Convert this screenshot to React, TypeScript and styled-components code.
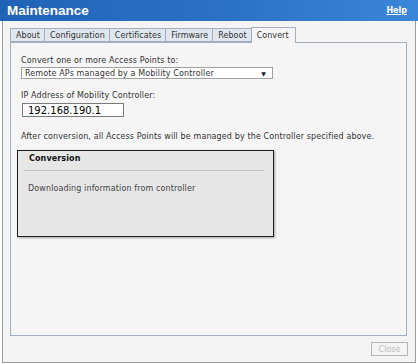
import React, { useState } from "react";
import styled, { createGlobalStyle } from "styled-components";

const GlobalStyle = createGlobalStyle`
  * {
    box-sizing: border-box;
  }
  body {
    margin: 0;
    background: #ffffff;
    font-family: "DejaVu Sans", Verdana, sans-serif;
  }
`

export const Window = styled.div`
  width: 418px;
  height: 364px;
  display: flex;
  flex-direction: column;
`

export const TitleBar = styled.div`
  height: 21px;
  flex-shrink: 0;
  display: flex;
  align-items: center;
  justify-content: space-between;
  padding: 0 11px 0 7px;
  background: linear-gradient(to right, #1f63b6 0%, #2a72c6 55%, #3a86d8 100%);
`

export const Title = styled.h1`
  margin: 0;
  color: #ffffff;
  font-family: "Liberation Sans", Arial, sans-serif;
  font-size: 13.5px;
  font-weight: bold;
`

export const HelpLink = styled.a`
  color: #ffffff;
  font-size: 8px;
  font-weight: bold;
  text-decoration: underline;
  cursor: pointer;
`

export const Panel = styled.div`
  margin: 0 2px 1px 2px;
  height: 342px;
  flex-shrink: 0;
  border: 1px solid #9c9c9c;
  border-top: none;
  background: #f4f4f4;
  padding: 7px 8px 0 7px;
  display: flex;
  flex-direction: column;
`

export const TabRow = styled.div`
  display: flex;
  align-items: flex-end;
  height: 14px;
  flex-shrink: 0;
  position: relative;
  z-index: 1;
`

export const Tab = styled.div<{ $active?: boolean }>`
  height: ${(p) => (p.$active ? "16px" : "14px")};
  margin-bottom: ${(p) => (p.$active ? "-1px" : "0")};
  display: flex;
  align-items: center;
  padding: 0 ${(p) => (p.$active ? "6px" : "4px")} 0 5px;
  font-size: 8px;
  letter-spacing: 0.05px;
  color: #333333;
  background: ${(p) => (p.$active ? "#f4f4f4" : "#dfe6ee")};
  border: 1px solid #a3adbc;
  border-bottom: ${(p) => (p.$active ? "none" : "1px solid #a3adbc")};
  margin-left: -1px;
  cursor: pointer;
  &:first-child {
    margin-left: 0;
  }
`

export const TabBody = styled.div`
  height: 294px;
  flex-shrink: 0;
  border: 1px solid #a3adbc;
  background: #f5f5f5;
  padding: 13px 10px 0 10px;
  display: flex;
  flex-direction: column;
  font-size: 8px;
  letter-spacing: 0.12px;
  color: #333333;
`

export const Label = styled.div`
  line-height: 10px;
`

export const Select = styled.div`
  width: 252px;
  height: 12px;
  margin-top: 1px;
  border: 1px solid #a0a0a0;
  background: #ffffff;
  display: flex;
  align-items: center;
  justify-content: space-between;
  padding: 0 6px 0 3px;
  color: #333333;
  font-size: 8px;
`

export const Arrow = styled.span`
  font-size: 6px;
  color: #222222;
`

export const Field = styled.div`
  margin-top: 12px;
  display: flex;
  flex-direction: column;
`

export const TextInput = styled.input`
  width: 102px;
  height: 14px;
  margin: 2px 0 0 1px;
  border: 1px solid #7a7a7a;
  background: #ffffff;
  padding: 0 5px;
  font-family: "DejaVu Sans", Verdana, sans-serif;
  font-size: 10px;
  color: #000000;
  outline: none;
`

export const Note = styled.div`
  margin-top: 15px;
  line-height: 10px;
`

export const StatusBox = styled.div`
  margin: 8px 0 0 -4px;
  width: 257px;
  height: 87px;
  border: 1px solid #1e1e1e;
  background: #e6e6e6;
  box-shadow: 1px 1px 2px rgba(0, 0, 0, 0.35);
  padding: 0 9px 0 6px;
  display: flex;
  flex-direction: column;
`

export const StatusTitle = styled.div`
  font-weight: bold;
  color: #111111;
  padding: 3px 0 0 5px;
  height: 20px;
  border-bottom: 1px solid #c4c4c4;
`

export const StatusText = styled.div`
  margin-top: 13px;
  padding-left: 4px;
  color: #444444;
`

export const Footer = styled.div`
  display: flex;
  justify-content: flex-end;
  margin-top: 6px;
`

export const CloseButton = styled.button`
  width: 37px;
  height: 14px;
  padding: 0;
  border: 1px solid #b4b4b4;
  background: #f4f4f4;
  color: #bcbcbc;
  font-family: "DejaVu Sans", Verdana, sans-serif;
  font-size: 8px;
  margin-right: -1px;
`

const tabs = ["About", "Configuration", "Certificates", "Firmware", "Reboot", "Convert"];

export default function App() {
  const [active, setActive] = useState("Convert");
  const [ip, setIp] = useState("192.168.190.1");
  return (
    <>
      <GlobalStyle />
      <Window>
        <TitleBar>
          <Title>Maintenance</Title>
          <HelpLink>Help</HelpLink>
        </TitleBar>
        <Panel>
          <TabRow>
            {tabs.map((t) => (
              <Tab key={t} $active={t === active} onClick={() => setActive(t)}>
                {t}
              </Tab>
            ))}
          </TabRow>
          <TabBody>
            <Label>Convert one or more Access Points to:</Label>
            <Select>
              <span>Remote APs managed by a Mobility Controller</span>
              <Arrow>▼</Arrow>
            </Select>
            <Field>
              <Label>IP Address of Mobility Controller:</Label>
              <TextInput value={ip} onChange={(e) => setIp(e.target.value)} />
            </Field>
            <Note>After conversion, all Access Points will be managed by the Controller specified above.</Note>
            <StatusBox>
              <StatusTitle>Conversion</StatusTitle>
              <StatusText>Downloading information from controller</StatusText>
            </StatusBox>
          </TabBody>
          <Footer>
            <CloseButton disabled>Close</CloseButton>
          </Footer>
        </Panel>
      </Window>
    </>
  );
}
